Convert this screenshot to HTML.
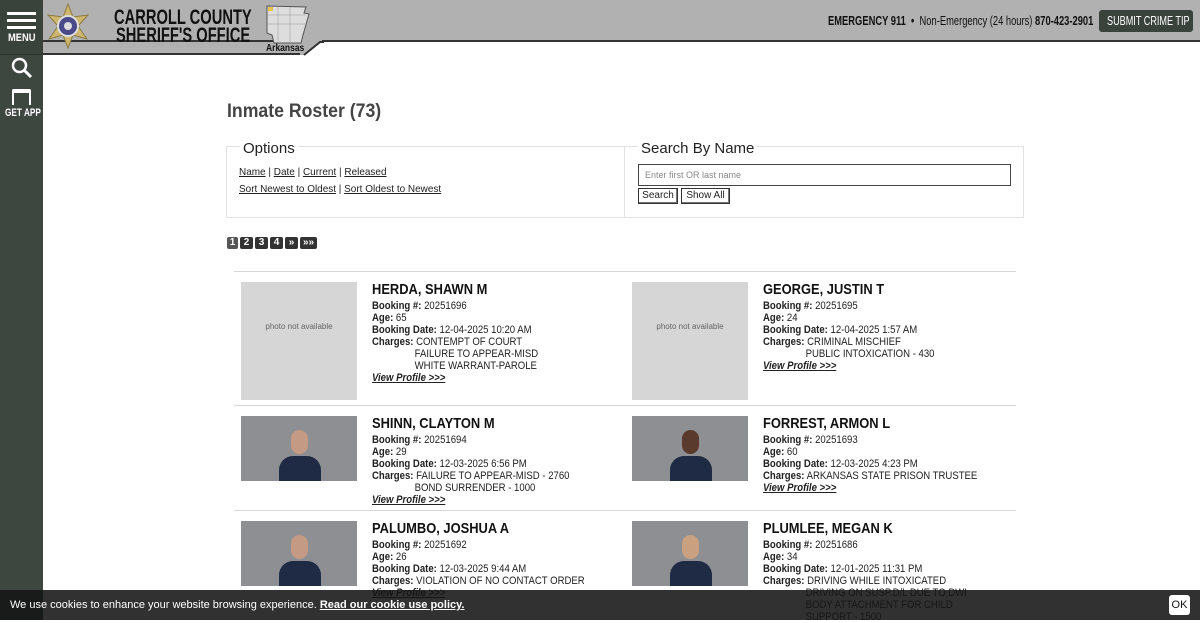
<!DOCTYPE html>
<html><head><meta charset="utf-8"><style>
*{box-sizing:border-box;margin:0;padding:0}
body{width:1200px;height:620px;overflow:hidden;background:#fff;font-family:"Liberation Sans",sans-serif;color:#222;position:relative}
.side{position:absolute;left:0;top:0;width:43px;height:620px;background:#3e4640}
.side .menu{height:55px;background:#3a423c;border-bottom:1px solid #2c322e}
.hdr{position:absolute;left:43px;top:0;width:1157px;height:42px;background:#b1b1b1;border-bottom:2px solid #333}
.hdr2{position:absolute;left:43px;top:42px;width:262px;height:13px;background:#b1b1b1;border-bottom:2px solid #333}
.cond{font-weight:bold;white-space:nowrap;transform-origin:left top}
.t{position:absolute;font-size:10.5px;transform:scaleX(.95);transform-origin:left top;white-space:nowrap}
h1{position:absolute;left:227px;top:101px;font-size:19px;font-weight:bold;color:#444;transform:scaleX(.93);transform-origin:left top}
.box{position:absolute;top:146px;height:72px;border:1px solid #e2e2e2}
.a{text-decoration:underline;color:#222}
.pg{position:absolute;top:237px;height:12px;background:#333;color:#fff;font-size:10px;font-weight:bold;text-align:center;line-height:12px;border-radius:2px}
.line{position:absolute;left:234px;width:782px;height:1px;background:#d8d8d8}
.ph{position:absolute;width:116px;background:#d6d6d6;color:#666;font-size:8px;text-align:center}
.mug{position:absolute;width:116px;height:65px;background:#8d8f93;overflow:hidden}
.mug .b{position:absolute;left:38px;top:40px;width:42px;height:40px;background:#1f2a45;border-radius:14px 14px 0 0}
.mug .h{position:absolute;left:50px;top:14px;width:17px;height:24px;border-radius:9px;background:#c49a84}
.name{position:absolute;font-size:15px;font-weight:bold;color:#111;transform:scaleX(.86);transform-origin:left top;white-space:nowrap}
.info{position:absolute;font-size:11px;line-height:12px;color:#222;transform:scaleX(.87);transform-origin:left top;white-space:nowrap}
.info .in{padding-left:49px}
.vp{font-weight:bold;font-style:italic;text-decoration:underline}
.cookie{position:absolute;left:0;top:590px;width:1200px;height:30px;background:rgba(20,20,20,.88);color:#fff;font-size:11px}
</style></head><body>
<div class="side">
 <div class="menu">
  <div style="position:absolute;left:7px;top:12px;width:29px;height:3px;background:#fff"></div>
  <div style="position:absolute;left:7px;top:19px;width:29px;height:3px;background:#fff"></div>
  <div style="position:absolute;left:7px;top:26px;width:29px;height:3px;background:#fff"></div>
  <div class="cond" style="position:absolute;left:8px;top:32px;color:#fff;font-size:11px;transform:scaleX(.85)">MENU</div>
 </div>
 <svg style="position:absolute;left:11px;top:57px" width="22" height="22" viewBox="0 0 22 22"><circle cx="8.5" cy="8.5" r="6.5" stroke="#fff" stroke-width="2.5" fill="none"/><path d="M13 13 L20 20" stroke="#fff" stroke-width="3"/></svg>
 <div style="position:absolute;left:12px;top:89px;width:19px;height:16px;border:2px solid #fff;border-top-width:4px;border-bottom:none;border-radius:2px 2px 0 0"></div>
 <div class="cond" style="position:absolute;left:5px;top:107px;color:#fff;font-size:11px;transform:scaleX(.75)">GET APP</div>
</div>
<div class="hdr"></div><div class="hdr2"></div>
<svg style="position:absolute;left:300px;top:40px" width="24" height="18"><polygon points="0,0 22,0 22,2 5,15 0,15" fill="#b1b1b1"/><path d="M4,15 L20,2 L24,2" stroke="#333" stroke-width="2" fill="none"/></svg>
<svg style="position:absolute;left:45px;top:3px" width="46" height="46" viewBox="0 0 46 46"><polygon points="23,1 28,14 43,12 33,23 42,36 28,32 23,45 18,32 4,36 13,23 3,12 18,14" fill="#cfb66e" stroke="#8a7a40"/><circle cx="23" cy="23" r="10" fill="#4a4a8a" stroke="#ddd" stroke-width="2"/><circle cx="23" cy="23" r="4" fill="#ddd"/></svg>
<div class="cond" style="position:absolute;left:114px;top:8px;font-size:21px;line-height:20px;color:#111;transform:scaleX(.7)">CARROLL COUNTY</div>
<div class="cond" style="position:absolute;left:116px;top:26px;font-size:21px;line-height:20px;color:#111;transform:scaleX(.7)">SHERIFF'S OFFICE</div>
<svg style="position:absolute;left:266px;top:5px" width="44" height="40"><path d="M1,1 L40,2 L38,8 L43,9 L37,30 L35,38 L8,38 L6,30 L1,28 Z" fill="#ddd" stroke="#555" stroke-width="1"/><path d="M1,10 H40 M1,19 H40 M12,1 V38 M24,2 V38" stroke="#999" stroke-width=".5"/><rect x="2" y="2" width="5" height="4" fill="#e8c24a"/></svg>
<div class="cond" style="position:absolute;left:266px;top:43px;font-size:10px;color:#111;transform:scaleX(.85)">Arkansas</div>
<div class="cond" style="position:absolute;left:828px;top:13px;font-size:13px;color:#111;transform:scaleX(.72)">EMERGENCY 911 &nbsp;•&nbsp; <span style="font-weight:normal">Non-Emergency (24 hours)</span> 870-423-2901</div>
<div style="position:absolute;left:1099px;top:10px;width:94px;height:22px;background:#3a423c;border-radius:3px"></div>
<div style="position:absolute;left:1107px;top:13px;color:#fff;font-size:13px;white-space:nowrap;transform:scaleX(.7);transform-origin:left top">SUBMIT CRIME TIP</div>

<h1>Inmate Roster (73)</h1>
<div class="box" style="left:226px;width:399px"></div>
<div class="box" style="left:625px;width:399px;border-left:none"></div>
<div style="position:absolute;left:240px;top:140px;background:#fff;padding:0 3px;font-size:15px;color:#222">Options</div>
<div style="position:absolute;left:638px;top:140px;background:#fff;padding:0 3px;font-size:15px;color:#222">Search By Name</div>
<div class="t" style="left:239px;top:166px"><span class="a">Name</span> | <span class="a">Date</span> | <span class="a">Current</span> | <span class="a">Released</span></div>
<div class="t" style="left:239px;top:183px"><span class="a">Sort Newest to Oldest</span> | <span class="a">Sort Oldest to Newest</span></div>
<div style="position:absolute;left:638px;top:164px;width:373px;height:22px;border:1px solid #444;font-size:9px;color:#888;padding:5px 6px">Enter first OR last name</div>
<div style="position:absolute;left:638px;top:188px;width:40px;height:16px;border:1px solid #333;box-shadow:inset -1px -1px #777;font-size:10px;text-align:center;line-height:14px">Search</div>
<div style="position:absolute;left:681px;top:188px;width:49px;height:16px;border:1px solid #333;box-shadow:inset -1px -1px #777;font-size:10px;text-align:center;line-height:14px">Show All</div>

<div class="pg" style="left:227px;width:11px;background:#555">1</div>
<div class="pg" style="left:240px;width:13px">2</div>
<div class="pg" style="left:255px;width:13px">3</div>
<div class="pg" style="left:270px;width:13px">4</div>
<div class="pg" style="left:285px;width:13px">»</div>
<div class="pg" style="left:300px;width:17px">»»</div>

<div class="line" style="top:271px"></div>
<div class="line" style="top:405px"></div>
<div class="line" style="top:510px"></div>

<div class="ph" style="left:241px;top:282px;height:118px;padding-top:40px">photo not available</div>
<div class="name" style="left:372px;top:281px">HERDA, SHAWN M</div>
<div class="info" style="left:372px;top:300px"><b>Booking #:</b> 20251696<br><b>Age:</b> 65<br><b>Booking Date:</b> 12-04-2025 10:20 AM<br><b>Charges:</b> CONTEMPT OF COURT<div class="in">FAILURE TO APPEAR-MISD<br>WHITE WARRANT-PAROLE</div><span class="vp">View Profile &gt;&gt;&gt;</span></div>

<div class="ph" style="left:632px;top:282px;height:118px;padding-top:40px">photo not available</div>
<div class="name" style="left:763px;top:281px">GEORGE, JUSTIN T</div>
<div class="info" style="left:763px;top:300px"><b>Booking #:</b> 20251695<br><b>Age:</b> 24<br><b>Booking Date:</b> 12-04-2025 1:57 AM<br><b>Charges:</b> CRIMINAL MISCHIEF<div class="in">PUBLIC INTOXICATION - 430</div><span class="vp">View Profile &gt;&gt;&gt;</span></div>

<div class="mug" style="left:241px;top:416px"><div class="h"></div><div class="b"></div></div>
<div class="name" style="left:372px;top:415px">SHINN, CLAYTON M</div>
<div class="info" style="left:372px;top:434px"><b>Booking #:</b> 20251694<br><b>Age:</b> 29<br><b>Booking Date:</b> 12-03-2025 6:56 PM<br><b>Charges:</b> FAILURE TO APPEAR-MISD - 2760<div class="in">BOND SURRENDER - 1000</div><span class="vp">View Profile &gt;&gt;&gt;</span></div>

<div class="mug" style="left:632px;top:416px"><div class="h" style="background:#5a3a2c"></div><div class="b"></div></div>
<div class="name" style="left:763px;top:415px">FORREST, ARMON L</div>
<div class="info" style="left:763px;top:434px"><b>Booking #:</b> 20251693<br><b>Age:</b> 60<br><b>Booking Date:</b> 12-03-2025 4:23 PM<br><b>Charges:</b> ARKANSAS STATE PRISON TRUSTEE<br><span class="vp">View Profile &gt;&gt;&gt;</span></div>

<div class="mug" style="left:241px;top:521px"><div class="h"></div><div class="b"></div></div>
<div class="name" style="left:372px;top:520px">PALUMBO, JOSHUA A</div>
<div class="info" style="left:372px;top:539px"><b>Booking #:</b> 20251692<br><b>Age:</b> 26<br><b>Booking Date:</b> 12-03-2025 9:44 AM<br><b>Charges:</b> VIOLATION OF NO CONTACT ORDER<br><span class="vp">View Profile &gt;&gt;&gt;</span></div>

<div class="mug" style="left:632px;top:521px"><div class="h" style="background:#c9a080"></div><div class="b"></div></div>
<div class="name" style="left:763px;top:520px">PLUMLEE, MEGAN K</div>
<div class="info" style="left:763px;top:539px"><b>Booking #:</b> 20251686<br><b>Age:</b> 34<br><b>Booking Date:</b> 12-01-2025 11:31 PM<br><b>Charges:</b> DRIVING WHILE INTOXICATED<div class="in">DRIVING ON SUSP.D/L DUE TO DWI<br>BODY ATTACHMENT FOR CHILD<br>SUPPORT - 1500</div></div>

<div class="cookie"><div style="position:absolute;left:10px;top:9px">We use cookies to enhance your website browsing experience. <b style="text-decoration:underline">Read our cookie use policy.</b></div>
<div style="position:absolute;left:1169px;top:5px;width:21px;height:20px;background:#fff;color:#111;border-radius:3px;text-align:center;line-height:20px;font-size:11px">OK</div></div>
</body></html>
